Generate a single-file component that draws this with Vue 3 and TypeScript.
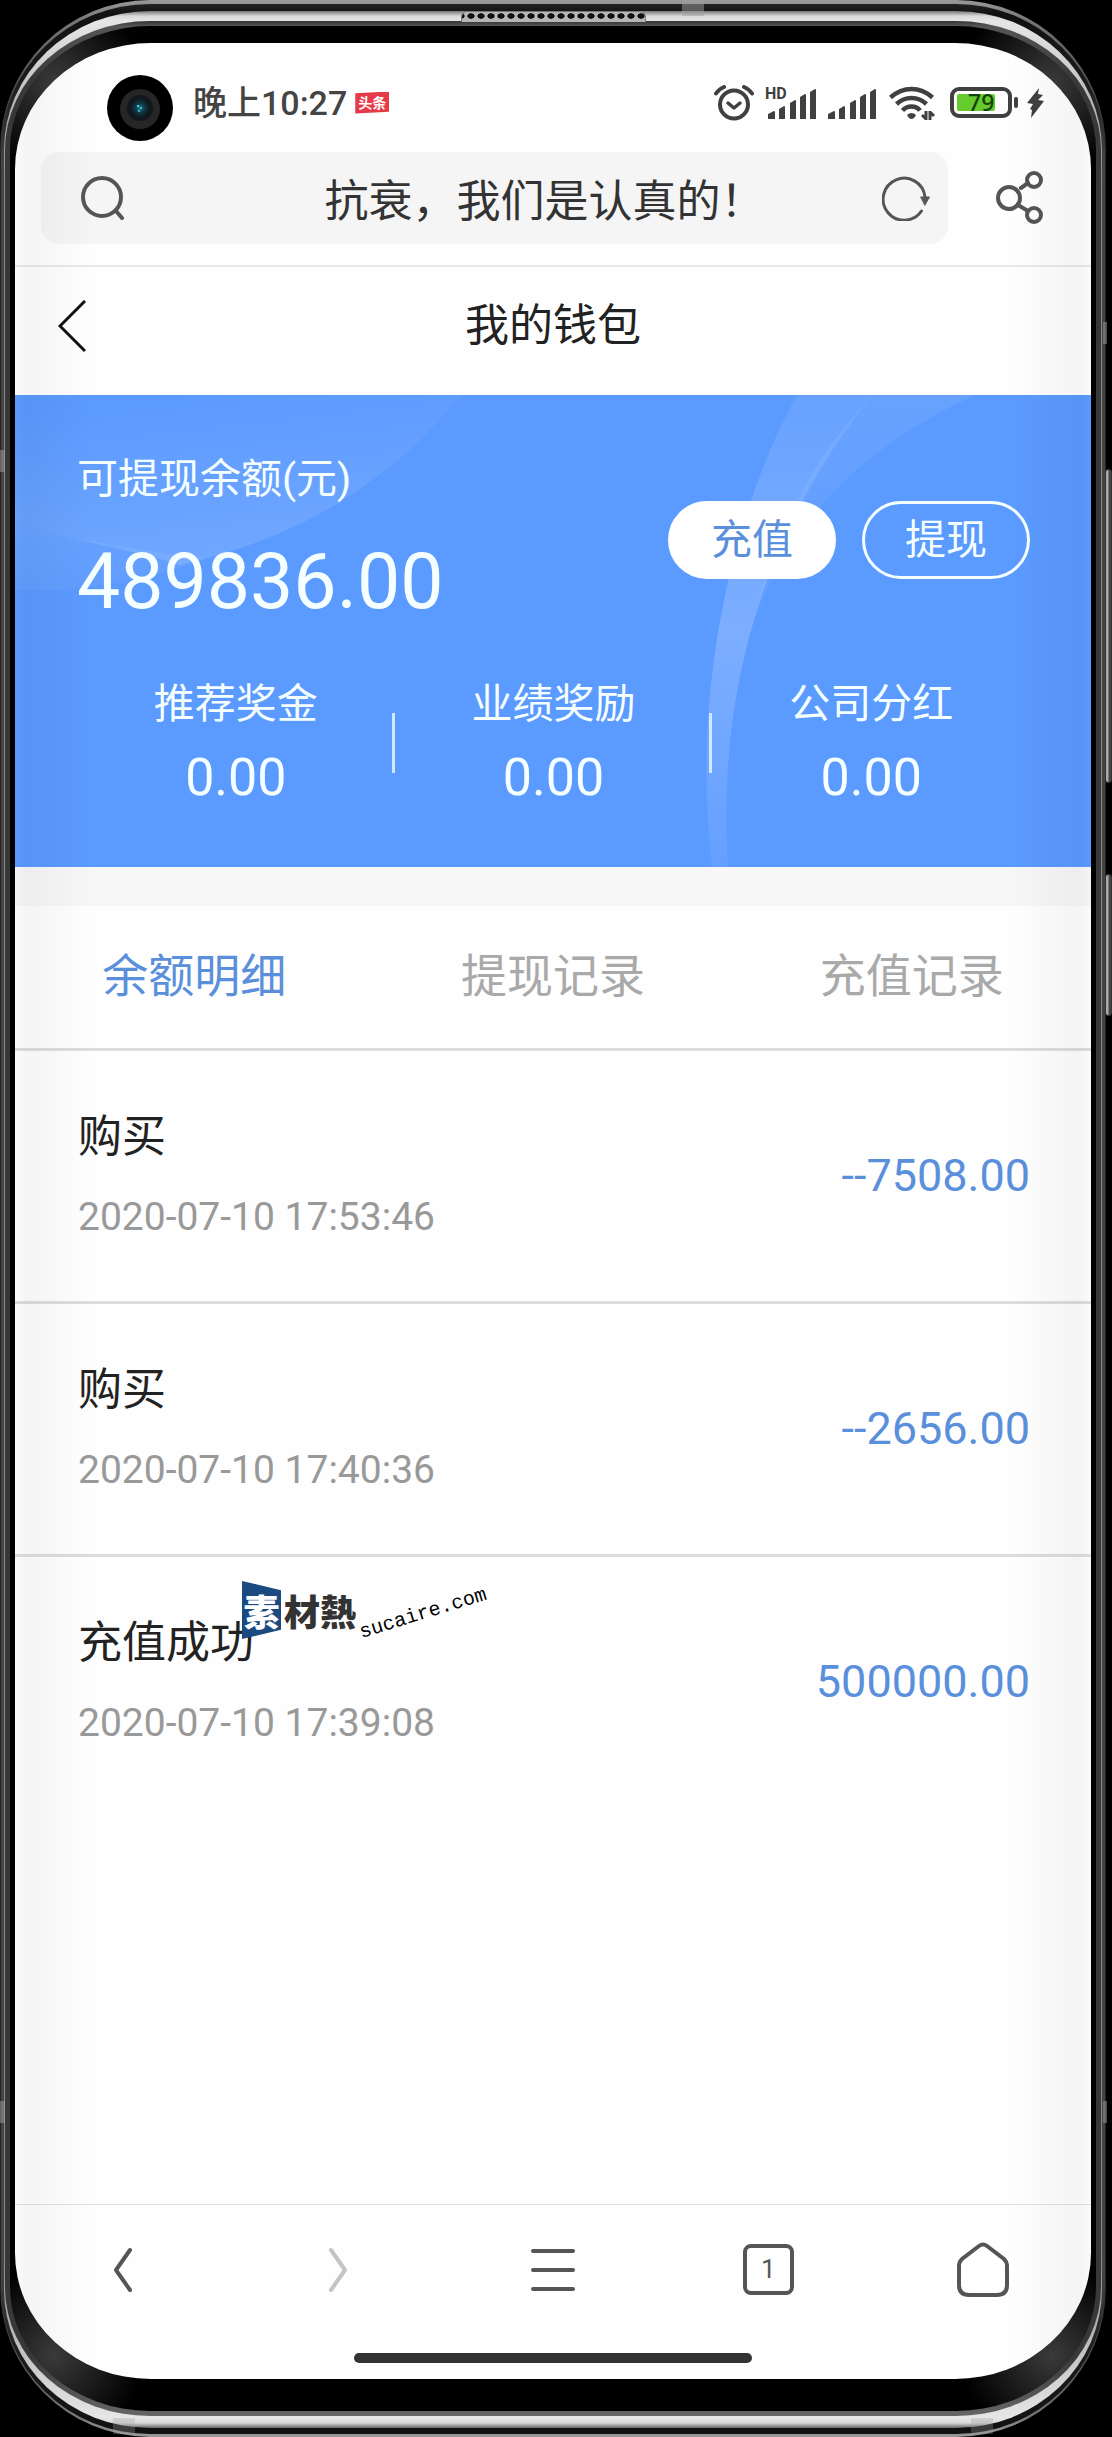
<script setup lang="ts">
import { ref } from 'vue'

interface Stat { label: string; value: string }
interface Entry { title: string; time: string; amount: string }

const pageTitle = ref('抗衰，我们是认真的！')

const stats: Stat[] = [
  { label: '推荐奖金', value: '0.00' },
  { label: '业绩奖励', value: '0.00' },
  { label: '公司分红', value: '0.00' },
]

const tabs = ['余额明细', '提现记录', '充值记录']
const activeTab = ref(0)

const entries: Entry[] = [
  { title: '购买', time: '2020-07-10 17:53:46', amount: '--7508.00' },
  { title: '购买', time: '2020-07-10 17:40:36', amount: '--2656.00' },
  { title: '充值成功', time: '2020-07-10 17:39:08', amount: '500000.00' },
]
</script>

<template>
  <div class="stage">
    <span class="side-key volume"></span>
    <span class="side-key power"></span>
    <div class="shell rim">
      <div class="shell groove">
        <div class="shell metal">
          <div class="shell lip">
            <div class="shell bezel">
              <main class="screen">
                <header class="status">
                  <svg class="camera" viewBox="0 0 66 66" aria-hidden="true">
                    <defs>
                      <radialGradient id="lens">
                        <stop offset="0" stop-color="#1f8094" />
                        <stop offset="0.45" stop-color="#0c3a48" />
                        <stop offset="1" stop-color="#10151c" />
                      </radialGradient>
                    </defs>
                    <circle cx="33" cy="33" r="33" fill="#000" />
                    <circle cx="33" cy="34" r="20" fill="#262626" />
                    <circle cx="33" cy="33" r="13" fill="#12161d" />
                    <circle cx="33" cy="33" r="10" fill="url(#lens)" />
                    <circle cx="31" cy="31" r="1" fill="#8fe6f5" />
                    <circle cx="34" cy="33" r="1" fill="#5fc6da" />
                    <circle cx="32" cy="36" r="1" fill="#5fc6da" />
                  </svg>
                  <span class="clock">晚上10:27</span>
                  <span class="badge">头条</span>
                  <span class="spacer"></span>
                  <svg class="alarm" width="40" height="36" viewBox="0 0 40 36" fill="none" stroke="#404040" aria-hidden="true">
                    <circle cx="20" cy="19.500" r="14" stroke-width="4" />
                    <path d="M14 18l6 5 6-5" stroke-width="3.500" stroke-linecap="round" stroke-linejoin="round" />
                    <path d="M2 8.500Q5 4 10 2M38 8.500Q35 4 30 2" stroke-width="4" stroke-linecap="round" />
                  </svg>
                  <svg class="signal-hd" width="52" height="42" viewBox="0 -3 52 42" fill="#404040" aria-hidden="true">
                    <text x="1" y="14" class="hd">HD</text>
                    <path d="M4 34v-5l6-3q1 0 1 1v7zM15 34v-10l5-3q1 0 1 1v12zM26 34v-16l5-3q1 0 1 1v18zM36 34v-22l5-3q1 0 1 1v24zM46 34v-27l5-3q1 0 1 1v29z" />
                  </svg>
                  <svg class="signal" width="48" height="36" viewBox="4 0 48 36" fill="#404040" aria-hidden="true">
                    <path d="M4 34v-5l6-3q1 0 1 1v7zM15 34v-10l5-3q1 0 1 1v12zM26 34v-16l5-3q1 0 1 1v18zM36 34v-22l5-3q1 0 1 1v24zM46 34v-27l5-3q1 0 1 1v29z" />
                  </svg>
                  <svg class="wifi" width="46" height="36" viewBox="0 0 46 36" fill="none" stroke="#404040" stroke-width="4.500" aria-hidden="true">
                    <path d="M1.500 12.500Q11 4 22.500 4T43.500 12.500" />
                    <path d="M7.500 19Q14 13 22.500 13T37.500 19" />
                    <path d="M13.500 25.500Q17 21.500 22.500 21.500T31 25.500" />
                    <path d="M18 30Q22.500 26 27 30Q25 34 22.500 34T18 30z" fill="#404040" stroke="none" />
                    <path d="M37 26v9M37 34l-4-4M41 35v-9M41 27l4 4" stroke-width="3" />
                  </svg>
                  <svg class="battery" width="68" height="32" viewBox="0 0 68 32" aria-hidden="true">
                    <rect x="2" y="2" width="58" height="27" rx="7" fill="none" stroke="#404040" stroke-width="4" />
                    <rect x="7" y="7" width="38" height="17" rx="2" fill="#66cb2d" />
                    <rect x="64" y="10" width="4" height="11" rx="2" fill="#404040" />
                    <text x="18" y="24" class="level">79</text>
                  </svg>
                  <svg class="bolt" width="18" height="32" viewBox="0 0 18 32" aria-hidden="true">
                    <path d="M13 1L1 16l6 1-3 5 2 1-1 8L18 14l-6-1 5-5-5-1z" fill="#404040" />
                  </svg>
                </header>

                <form class="address" @submit.prevent>
                  <div class="pill">
                    <svg width="44" height="44" viewBox="0 0 44 44" fill="none" stroke="#555" stroke-width="4" stroke-linecap="round" aria-hidden="true">
                      <circle cx="21" cy="21" r="19" />
                      <path d="M35 35l6 7" />
                    </svg>
                    <input v-model="pageTitle" type="text" aria-label="地址栏" />
                    <button type="button" class="icon" aria-label="刷新">
                      <svg width="48" height="46" viewBox="0 0 48 46" fill="none" stroke="#555" stroke-width="3" stroke-linecap="round">
                        <path d="M39.500 36A21 21 0 1 1 43 22" />
                        <path d="M39 22h8.500l-4.500 8z" fill="#555" stroke-width="1" stroke-linejoin="round" />
                      </svg>
                    </button>
                  </div>
                  <button type="button" class="icon" aria-label="分享">
                    <svg width="48" height="54" viewBox="0 0 48 54" fill="none" stroke="#555" stroke-width="4">
                      <circle cx="13" cy="27" r="11" />
                      <circle cx="38" cy="9" r="7" />
                      <circle cx="38" cy="44" r="7" />
                      <path d="M25 17l7-5M22 34l10 6" stroke-linecap="round" />
                    </svg>
                  </button>
                </form>

                <nav class="title-bar">
                  <button type="button" class="icon back" aria-label="返回">
                    <svg width="28" height="52" viewBox="0 0 28 52" fill="none" stroke="#111" stroke-width="3">
                      <path d="M27 1L2 26l25 25" />
                    </svg>
                  </button>
                  <h1>我的钱包</h1>
                </nav>

                <section class="wallet">
                  <svg class="waves" viewBox="0 0 1076 472" preserveAspectRatio="none" aria-hidden="true">
                    <defs>
                      <linearGradient id="sweep" x1="0.3" y1="0" x2="0.6" y2="1">
                        <stop offset="0" stop-color="#fff" stop-opacity="0" />
                        <stop offset="1" stop-color="#fff" stop-opacity="0.140" />
                      </linearGradient>
                      <linearGradient id="fade" x1="0" y1="0" x2="0" y2="1">
                        <stop offset="0" stop-color="#fff" stop-opacity="0.080" />
                        <stop offset="1" stop-color="#fff" stop-opacity="0.040" />
                      </linearGradient>
                      <linearGradient id="band" x1="0" y1="0" x2="0" y2="1">
                        <stop offset="0" stop-color="#fff" stop-opacity="0.080" />
                        <stop offset="0.5" stop-color="#fff" stop-opacity="0.200" />
                        <stop offset="1" stop-color="#fff" stop-opacity="0.060" />
                      </linearGradient>
                    </defs>
                    <path d="M446 0C380 82 290 142 165 170C110 152 50 146 0 123V0z" fill="url(#sweep)" />
                    <path d="M190 164C120 190 50 197 0 195V123C50 146 110 152 190 164z" fill="url(#fade)" />
                    <path d="M782 0C726 100 674 280 697 472H713C704 330 730 160 857 0z" fill="url(#band)" />
                    <path d="M857 0C790 75 765 130 735 235C770 140 830 60 960 0z" fill="url(#fade)" />
                  </svg>
                  <div class="balance">
                    <div>
                      <p class="label">可提现余额(元)</p>
                      <p class="total">489836.00</p>
                    </div>
                    <div class="actions">
                      <button type="button" class="pill-btn solid">充值</button>
                      <button type="button" class="pill-btn">提现</button>
                    </div>
                  </div>
                  <dl class="stats">
                    <div v-for="s in stats" :key="s.label" class="stat">
                      <dt>{{ s.label }}</dt>
                      <dd>{{ s.value }}</dd>
                    </div>
                  </dl>
                </section>

                <div class="tabs" role="tablist">
                  <button
                    v-for="(t, i) in tabs"
                    :key="t"
                    type="button"
                    role="tab"
                    :aria-selected="i === activeTab"
                    :class="{ active: i === activeTab }"
                    @click="activeTab = i"
                  >{{ t }}</button>
                </div>

                <ul class="entries">
                  <li v-for="e in entries" :key="e.time">
                    <div class="meta">
                      <p class="what">{{ e.title }}</p>
                      <time>{{ e.time }}</time>
                    </div>
                    <span class="amount">{{ e.amount }}</span>
                  </li>
                  <li class="mark" aria-hidden="true">
                    <span class="mark-tile">素</span><span class="mark-name">材熱</span><span class="mark-site">sucaire.com</span>
                  </li>
                </ul>

                <footer>
                  <nav class="toolbar">
                    <button type="button" aria-label="后退">
                      <svg width="18" height="46" viewBox="0 0 18 46" fill="none" stroke="#555" stroke-width="4" stroke-linecap="round" stroke-linejoin="round"><path d="M16 3L2 23l14 20" /></svg>
                    </button>
                    <button type="button" aria-label="前进">
                      <svg width="18" height="46" viewBox="0 0 18 46" fill="none" stroke="#c4c4c4" stroke-width="4" stroke-linecap="round" stroke-linejoin="round"><path d="M2 3l14 20L2 43" /></svg>
                    </button>
                    <button type="button" aria-label="菜单">
                      <svg width="46" height="46" viewBox="0 0 46 46" stroke="#555" stroke-width="4" stroke-linecap="round"><path d="M3 4h40M3 23h40M3 42h40" /></svg>
                    </button>
                    <button type="button" aria-label="标签页"><span class="count">1</span></button>
                    <button type="button" aria-label="主页">
                      <svg width="52" height="56" viewBox="0 0 52 56" fill="none" stroke="#555" stroke-width="4"><path d="M22 4Q26 1 30 4L47 17Q50 20 50 23V43Q50 53 40 53H12Q2 53 2 43V23Q2 20 5 17z" /></svg>
                    </button>
                  </nav>
                  <span class="home-bar"></span>
                </footer>
                <span class="edge"></span>
              </main>
            </div>
          </div>
        </div>
      </div>
    </div>
    <span class="grille"></span>
    <span class="antenna top"></span>
    <span class="antenna left"></span>
    <span class="antenna left low"></span>
    <span class="antenna right"></span>
    <span class="antenna right low"></span>
    <span class="antenna foot"></span>
    <span class="antenna foot far"></span>
  </div>
</template>

<style>
body {
  margin: 0;
  background: #000;
}
</style>

<style scoped>
* {
  box-sizing: border-box;
  margin: 0;
  padding: 0;
}
.stage {
  position: relative;
  display: flex;
  min-height: 100vh;
  padding-right: 6px;
  background: #000;
  font-family: Roboto, "Noto Sans CJK SC", sans-serif;
  color: #222;
}
.shell {
  display: flex;
  flex: 1;
  min-width: 0;
}
.rim {
  padding: 4px 1px 3px;
  border-radius: 150px;
  background: linear-gradient(#999, #777 20px, #222 160px, #222 calc(100% - 160px), #777 calc(100% - 20px), #999);
}
.groove {
  padding: 7px 3px 6px;
  border-radius: 149px / 146px;
  background: linear-gradient(#222, #111 10px, #1c1c1c 80px, #444 160px, #444 calc(100% - 160px), #1c1c1c calc(100% - 80px), #111);
}
.metal {
  padding: 10px 1px 12px;
  border-radius: 146px / 139px;
  background: linear-gradient(#777, #d8d8d8 5px, #e6e6e6 10px, #ccc 60px, #999 140px, #888 170px, #888 calc(100% - 170px), #999 calc(100% - 140px), #ccc calc(100% - 60px), #e6e6e6 calc(100% - 10px), #d8d8d8 calc(100% - 5px), #666);
}
.lip {
  padding: 5px;
  border-radius: 145px / 129px;
  background: linear-gradient(#333, #555 5px, #383838 60px, #383838 calc(100% - 60px), #666);
}
.bezel {
  padding: 17px 5px 32px;
  border-radius: 140px / 124px;
  background:
    radial-gradient(circle at 44px 56px, #3a3a3a, transparent 90px),
    radial-gradient(circle at calc(100% - 44px) 56px, #3a3a3a, transparent 90px),
    radial-gradient(circle at 44px calc(100% - 56px), #3a3a3a, transparent 90px),
    radial-gradient(circle at calc(100% - 44px) calc(100% - 56px), #3a3a3a, transparent 90px),
    #000;
}
.screen {
  position: relative;
  display: flex;
  flex: 1;
  flex-direction: column;
  min-width: 0;
  overflow: hidden;
  border-radius: 136px / 126px;
  background: #fefefe;
}
.edge {
  position: absolute;
  inset: 0;
  pointer-events: none;
  background:
    linear-gradient(to right, rgba(0, 0, 0, 0.01), rgba(0, 0, 0, 0.04) 12px, rgba(0, 0, 0, 0.02) 45px, transparent 80px),
    linear-gradient(to left, rgba(0, 0, 0, 0.01), rgba(0, 0, 0, 0.04) 12px, rgba(0, 0, 0, 0.02) 50px, transparent 80px);
}

.status {
  display: flex;
  align-items: center;
  height: 109px;
  padding: 10px 47px 0 92px;
}
.camera {
  width: 66px;
  height: 66px;
  margin-top: 10px;
}
.clock {
  margin-left: 20px;
  font-size: 34px;
  line-height: 40px;
  font-weight: 500;
  color: #444;
}
.badge {
  width: 34px;
  height: 22px;
  margin-left: 8px;
  background: #e63a48;
  clip-path: polygon(0 8%, 100% 0, 100% 92%, 0 100%);
  color: #fff;
  font-size: 14px;
  line-height: 22px;
  font-weight: 700;
  text-align: center;
}
.spacer {
  flex: 1;
}
.signal-hd {
  margin-left: 10px;
}
.signal {
  margin-left: 12px;
}
.wifi {
  margin-left: 13px;
}
.battery {
  margin-left: 15px;
}
.bolt {
  margin-left: 8px;
}
.hd {
  font: 700 16px Roboto, sans-serif;
}
.level {
  font: 500 23px "Noto Sans", sans-serif;
  fill: #14400a;
}

.address {
  display: flex;
  align-items: center;
  gap: 48px;
  padding: 0 47px 21px 26px;
  border-bottom: 2px solid #e9e9e9;
}
.pill {
  display: flex;
  flex: 1;
  align-items: center;
  min-width: 0;
  height: 92px;
  padding: 0 18px 0 40px;
  border-radius: 18px;
  background: #f5f5f5;
}
.pill input {
  flex: 1;
  min-width: 0;
  padding-left: 82px;
  border: 0;
  outline: 0;
  background: none;
  font: 44px / 60px "Noto Sans CJK SC", sans-serif;
  color: #333;
  text-align: center;
}
button {
  border: 0;
  background: none;
  font-family: inherit;
  color: inherit;
  cursor: pointer;
}
svg {
  display: block;
  flex: none;
}
.icon {
  display: block;
}

.title-bar {
  position: relative;
  display: flex;
  align-items: center;
  justify-content: center;
  height: 128px;
  padding-bottom: 10px;
}
.back {
  position: absolute;
  left: 43px;
}
h1 {
  font-size: 44px;
  line-height: 60px;
  font-weight: 400;
}

.wallet {
  position: relative;
  padding: 54px 61px 59px 62px;
  background: #5b9aff;
  color: #f6ffff;
}
.waves {
  position: absolute;
  inset: 0;
  width: 100%;
  height: 100%;
}
.balance {
  position: relative;
  display: flex;
  align-items: center;
  justify-content: space-between;
}
.label {
  font-size: 41px;
  line-height: 60px;
}
.total {
  margin-top: 28px;
  font-size: 77px;
  line-height: 90px;
}
.actions {
  display: flex;
  gap: 26px;
  padding-top: 4px;
}
.pill-btn {
  width: 168px;
  height: 78px;
  border: 3px solid #f6ffff;
  border-radius: 39px;
  font-size: 41px;
  line-height: 60px;
}
.solid {
  border-color: #fff;
  background: #fff;
  color: #5a8fdc;
}
.stats {
  position: relative;
  display: flex;
  margin-top: 47px;
}
.stat {
  position: relative;
  flex: 1;
  text-align: center;
}
.stat + .stat::before {
  content: "";
  position: absolute;
  top: 39px;
  left: -3px;
  width: 3px;
  height: 60px;
  background: #cdeaff;
}
dt {
  font-size: 41px;
  line-height: 60px;
}
dd {
  margin-top: 14px;
  font-size: 52px;
  line-height: 60px;
}

.tabs {
  display: flex;
  border-top: 39px solid #f7f7f7;
  border-bottom: 3px solid #ddd;
}
.tabs button {
  flex: 1;
  height: 142px;
  padding-bottom: 10px;
  font-size: 46px;
  color: #a9a9a9;
}
.tabs .active {
  color: #5a8fdc;
}

.entries {
  position: relative;
  flex: 1;
  list-style: none;
}
.entries li {
  display: flex;
  align-items: center;
  justify-content: space-between;
  height: 250px;
  padding: 0 61px 0 63px;
}
.entries li + li:not(.mark) {
  height: 253px;
  border-top: 3px solid #ddd;
}
.meta {
  padding-bottom: 8px;
}
.what {
  font-size: 44px;
  line-height: 60px;
}
time {
  display: block;
  margin-top: 30px;
  font-size: 39px;
  line-height: 40px;
  color: #999;
}
.amount {
  font-size: 45px;
  line-height: 60px;
  color: #5a8fdc;
}
.entries .mark {
  position: absolute;
  top: 530px;
  left: 227px;
  height: 58px;
  padding: 0;
  font-family: "Noto Sans CJK TC", sans-serif;
  font-size: 36px;
  font-weight: 900;
  line-height: 58px;
}
.mark-tile {
  width: 39px;
  background: #1b4a80;
  clip-path: polygon(0 0, 100% 16%, 100% 84%, 0 100%);
  color: #fff;
  text-align: center;
}
.mark-name {
  margin-left: 3px;
  color: #333;
}
.mark-site {
  padding-top: 8px;
  font-family: "Liberation Mono", monospace;
  font-size: 20px;
  font-weight: 400;
  color: #000;
  transform: rotate(-17deg);
}

.toolbar {
  display: flex;
  align-items: center;
  height: 130px;
  border-top: 1px solid #e0e0e0;
}
.toolbar button {
  display: flex;
  flex: 1;
  align-items: center;
  justify-content: center;
}
.count {
  width: 51px;
  height: 51px;
  border: 4px solid #555;
  border-radius: 8px;
  font-size: 26px;
  line-height: 43px;
  color: #555;
}
footer {
  padding-bottom: 16px;
}
.home-bar {
  display: block;
  width: 37%;
  height: 10px;
  margin: 19px auto 0;
  border-radius: 5px;
  background: #333;
}

.side-key {
  position: absolute;
  right: 0;
  width: 7px;
  border: 1px solid #333;
  border-radius: 3px;
  background: linear-gradient(to right, #aaa 2px, #444 3px);
}
.volume {
  top: 469px;
  height: 314px;
}
.power {
  top: 874px;
  height: 142px;
}
.grille {
  position: absolute;
  top: 11px;
  left: 461px;
  right: 466px;
  height: 11px;
  border: 1px solid #777;
  border-bottom: 0;
  border-radius: 6px 6px 0 0;
  background: radial-gradient(ellipse 4px 3px, #111 80%, transparent) 4px 0 / 10px 8px repeat-x #b5b5b5;
}
.antenna {
  position: absolute;
  background: rgba(160, 160, 160, 0.5);
}
.antenna.top {
  top: 0;
  left: 682px;
  width: 22px;
  height: 16px;
}
.antenna.left {
  top: 450px;
  left: 0;
  width: 5px;
  height: 22px;
}
.antenna.right {
  top: 322px;
  right: 5px;
  width: 4px;
  height: 22px;
}
.antenna.low {
  top: auto;
  bottom: 314px;
}
.antenna.foot {
  bottom: 3px;
  left: 113px;
  width: 22px;
  height: 16px;
  background: rgba(160, 160, 160, 0.3);
}
.antenna.far {
  left: auto;
  right: 119px;
}
</style>
